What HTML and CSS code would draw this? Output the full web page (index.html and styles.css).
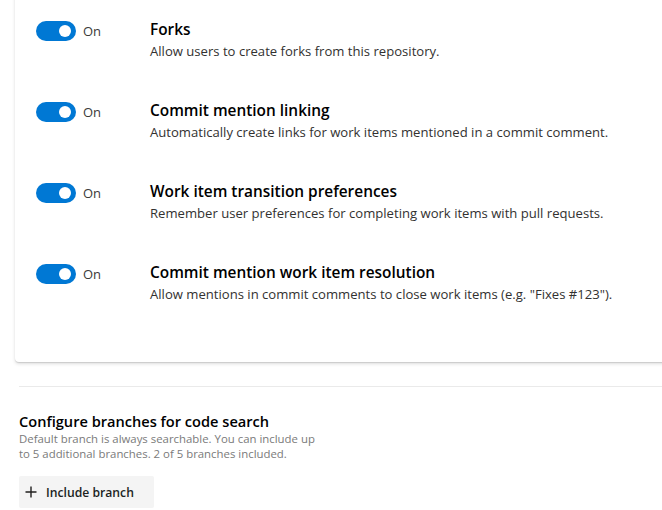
FILE: index.html
```html
<!DOCTYPE html>
<html lang="en">
<head>
<meta charset="utf-8">
<title>Repository settings</title>
<link rel="stylesheet" href="styles.css">
</head>
<body>
<div class="card">
  <div class="row">
    <div class="toggle-col">
      <span class="toggle"><span class="knob"></span></span>
      <span class="toggle-label">On</span>
    </div>
    <div class="text-col">
      <div class="title">Forks</div>
      <div class="desc">Allow users to create forks from this repository.</div>
    </div>
  </div>
  <div class="row">
    <div class="toggle-col">
      <span class="toggle"><span class="knob"></span></span>
      <span class="toggle-label">On</span>
    </div>
    <div class="text-col">
      <div class="title">Commit mention linking</div>
      <div class="desc">Automatically create links for work items mentioned in a commit comment.</div>
    </div>
  </div>
  <div class="row">
    <div class="toggle-col">
      <span class="toggle"><span class="knob"></span></span>
      <span class="toggle-label">On</span>
    </div>
    <div class="text-col">
      <div class="title">Work item transition preferences</div>
      <div class="desc">Remember user preferences for completing work items with pull requests.</div>
    </div>
  </div>
  <div class="row">
    <div class="toggle-col">
      <span class="toggle"><span class="knob"></span></span>
      <span class="toggle-label">On</span>
    </div>
    <div class="text-col">
      <div class="title">Commit mention work item resolution</div>
      <div class="desc">Allow mentions in commit comments to close work items (e.g. "Fixes #123").</div>
    </div>
  </div>
</div>
<div class="separator"></div>
<section class="branches">
  <h2 class="branches-title">Configure branches for code search</h2>
  <p class="branches-desc">Default branch is always searchable. You can include up to 5 additional branches. 2 of 5 branches included.</p>
  <button class="btn" type="button">
    <svg class="plus" width="12" height="12" viewBox="0 0 12 12" aria-hidden="true"><path d="M6 0.5V11.5M0.5 6H11.5" stroke="#201f1e" stroke-width="1.4" fill="none"/></svg>
    <span>Include branch</span>
  </button>
</section>
</body>
</html>
```
FILE: styles.css
```css
html, body {
  margin: 0;
  padding: 0;
  background: #ffffff;
  overflow: hidden;
}
body {
  font-family: "Open Sans", "Noto Sans", sans-serif;
  color: #201f1e;
  width: 662px;
  height: 510px;
}
.card {
  margin: -10px -20px 0 15px;
  padding: 30px 0 18px 21px;
  background: #fff;
  border-radius: 4px;
  box-shadow: 0 1.6px 3.6px rgba(0,0,0,0.13), 0 0.3px 0.9px rgba(0,0,0,0.11);
}
.row {
  display: flex;
  align-items: flex-start;
  height: 81px;
}
.toggle-col {
  width: 114px;
  display: flex;
  align-items: center;
  gap: 7px;
  height: 21px;
}
.toggle {
  width: 40px;
  height: 20px;
  border-radius: 10px;
  background: #0078d4;
  display: flex;
  align-items: center;
  justify-content: flex-end;
  padding-right: 5px;
  box-sizing: border-box;
}
.knob {
  width: 12px;
  height: 12px;
  border-radius: 50%;
  background: #fff;
}
.toggle-label {
  font-size: 13px;
  color: #3b3a39;
}
.text-col {
  display: flex;
  flex-direction: column;
}
.title {
  font-size: 15.4px;
  font-weight: 600;
  line-height: 20px;
  color: #000;
}
.desc {
  margin-top: 1px;
  font-size: 13.1px;
  line-height: 20px;
  color: #323130;
}
.separator {
  height: 1px;
  background: #eaeaea;
  margin: 24px 0 0 19px;
}
.branches {
  padding-left: 19px;
}
.branches-title {
  margin: 24px 0 0;
  font-size: 14.6px;
  font-weight: 600;
  line-height: 20px;
  color: #000;
}
.branches-desc {
  margin: 0;
  width: 302px;
  font-size: 11.4px;
  line-height: 15px;
  color: #7a7a7a;
}
.btn {
  margin-top: 15px;
  display: flex;
  align-items: center;
  gap: 9px;
  width: 135px;
  height: 32px;
  padding: 0 0 0 6px;
  border: none;
  border-radius: 2px;
  background: #f4f4f4;
  font-family: inherit;
  font-size: 12.2px;
  font-weight: 600;
  color: #201f1e;
}
.plus {
  display: block;
}
```
